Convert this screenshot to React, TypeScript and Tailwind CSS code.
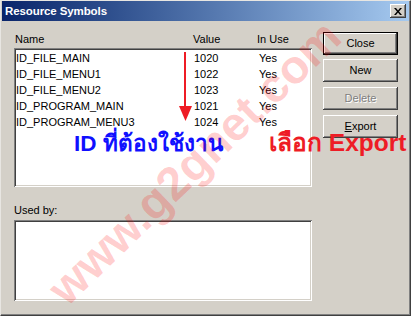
import React from "react";

const btnBevel =
  "shadow-[inset_-1px_-1px_0_#404040,inset_1px_1px_0_#ffffff,inset_-2px_-2px_0_#808080,inset_2px_2px_0_#d4d0c8]";
const sunken =
  "shadow-[inset_1px_1px_0_#808080,inset_-1px_-1px_0_#ffffff,inset_2px_2px_0_#404040,inset_-2px_-2px_0_#d4d0c8]";

const rows = [
  ["ID_FILE_MAIN", "1020", "Yes"],
  ["ID_FILE_MENU1", "1022", "Yes"],
  ["ID_FILE_MENU2", "1023", "Yes"],
  ["ID_PROGRAM_MAIN", "1021", "Yes"],
  ["ID_PROGRAM_MENU3", "1024", "Yes"],
];

export default function App() {
  return (
    <div className="relative w-[411px] h-[316px] overflow-hidden bg-[#d4d0c8] font-['Liberation_Sans',Arial,sans-serif] text-[11px] text-black leading-[13px]">
      <div className="w-[411px] h-[316px] border-t border-l border-t-[#e8e6e2] border-l-[#e8e6e2] border-r border-b border-r-[#404040] border-b-[#404040]">
        <div className="w-full h-full border-r border-b border-r-[#808080] border-b-[#808080] pl-[1px] flex flex-col">
          {/* Title bar */}
          <div className="h-[20px] w-[407px] flex items-center justify-between bg-gradient-to-r from-[#0a246a] to-[#a6caf0] pl-[3px] pr-[3px]">
            <span className="text-white font-bold text-[11.5px] tracking-[-0.1px]">Resource Symbols</span>
            <div className={`w-[16px] h-[14px] bg-[#d4d0c8] ${btnBevel} flex items-center justify-center`}>
              <svg width="8" height="7" viewBox="0 0 8 7">
                <path d="M0 0h2l2 2.5L6 0h2L5 3.5 8 7H6L4 4.5 2 7H0l3-3.5z" fill="#000" />
              </svg>
            </div>
          </div>
          {/* Body */}
          <div className="flex flex-row pl-[12px]">
            <div className="w-[298px] flex flex-col pt-[12px]">
              <div className="h-[13px] relative">
                <span className="absolute left-[1px] top-0">Name</span>
                <span className="absolute left-[179px] top-0">Value</span>
                <span className="absolute left-[243px] top-0">In Use</span>
              </div>
              <div className={`mt-[2px] h-[139px] bg-white ${sunken} pt-[2px] pl-[2px]`}>
                {rows.map((r) => (
                  <div key={r[0]} className="h-[16px] leading-[16px] flex">
                    <span className="w-[178px]">{r[0]}</span>
                    <span className="w-[65px]">{r[1]}</span>
                    <span>{r[2]}</span>
                  </div>
                ))}
              </div>
              <div className="mt-[17px] h-[13px]">Used by:</div>
              <div className={`mt-[3px] h-[81px] bg-white ${sunken}`} />
            </div>
            <div className="ml-[11px] w-[75px] flex flex-col pt-[11px]">
              <div className="h-[23px] border border-black">
                <div className={`h-full ${btnBevel} flex items-center justify-center`}>Close</div>
              </div>
              <div className={`mt-[4px] h-[23px] ${btnBevel} flex items-center justify-center`}>New</div>
              <div className={`mt-[5px] h-[23px] ${btnBevel} flex items-center justify-center text-[#808080] [text-shadow:1px_1px_0_#ffffff]`}>
                Delete
              </div>
              <div className={`mt-[5px] h-[23px] ${btnBevel} flex items-center justify-center`}>
                <span><span className="underline">E</span>xport</span>
              </div>
            </div>
          </div>
        </div>
      </div>

      {/* Red arrow */}
      <div className="absolute left-[184px] top-[52px] w-[2px] h-[56px] bg-[#ee1c25]" />
      <svg className="absolute left-[179px] top-[106px]" width="13" height="15" viewBox="0 0 13 15">
        <path d="M0 0 L13 0 L6.5 15 Z" fill="#ee1c25" />
      </svg>

      {/* Annotations */}
      <div className="absolute left-[74px] top-[129px] text-[22.5px] leading-[30px] font-bold text-[#1010ff] whitespace-nowrap">
        ID ที่ต้องใช้งาน
      </div>
      <div className="absolute left-[269px] top-[128px] text-[24.5px] leading-[30px] font-bold text-[#ee1c25] whitespace-nowrap">
        เลือก Export
      </div>

      {/* Watermark */}
      <div className="absolute left-[194px] top-[162px] -translate-x-1/2 -translate-y-1/2 -rotate-[44deg] whitespace-nowrap text-[47px] leading-[47px] font-bold text-[rgba(255,0,0,0.2)] pointer-events-none">
        www.g2gnet.com
      </div>
    </div>
  );
}
